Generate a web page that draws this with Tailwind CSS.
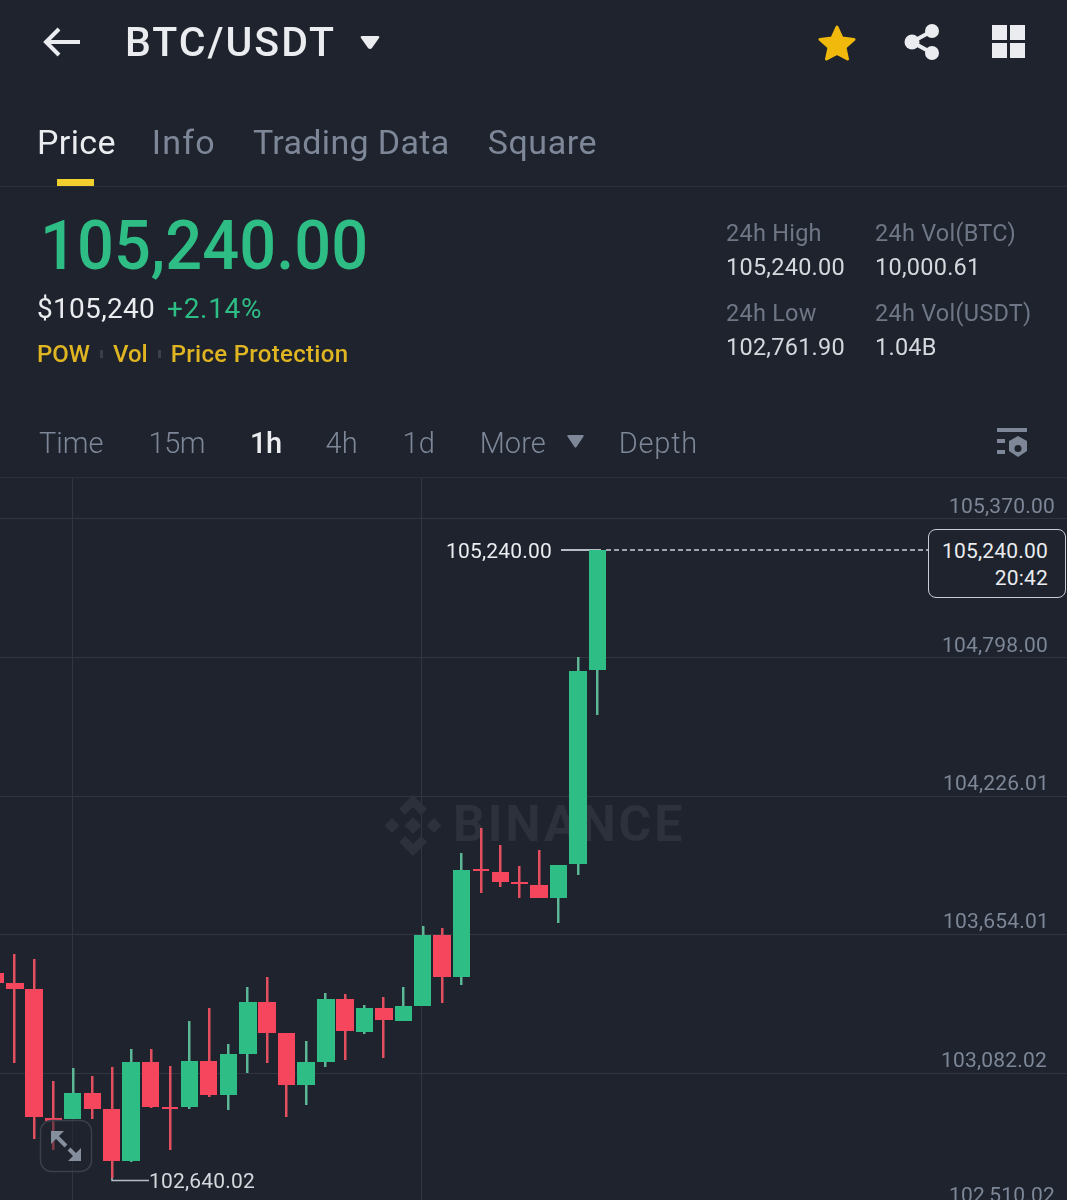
<!DOCTYPE html>
<html lang="en">
<head>
<meta charset="utf-8">
<title>BTC/USDT</title>
<script src="https://cdn.jsdelivr.net/npm/@tailwindcss/browser@4"></script>
</head>
<body class="m-0 bg-[#1e232d] font-['Roboto',sans-serif]">
<div class="w-[1067px] h-[1200px] overflow-hidden flex flex-col bg-[#1e232d] text-[#eaecef]">

  <header class="h-[84px] shrink-0 flex items-center pl-[42px] pr-[41px]">
    <svg class="w-[38px] h-[30px]" viewBox="0 0 38 30" fill="none" stroke="#eaecef" stroke-width="4"><path d="M38 15H3"/><path d="M17 2 4 15l13 13"/></svg>
    <span class="ml-[45px] text-[41px] leading-none font-medium tracking-[2px]">BTC/USDT</span>
    <svg class="ml-[24px] w-[20px] h-[15px]" viewBox="0 0 20 15" fill="#eaecef"><path d="M2 1h16q2 0 1 2l-7 10q-2 2-4 0L1 3Q0 1 2 1z"/></svg>
    <div class="ml-auto flex items-center">
      <svg class="w-[38px] h-[37px]" viewBox="0 0 38 37"><path fill="#f0b90b" stroke="#f0b90b" stroke-width="3" stroke-linejoin="round" d="M19 3l5 11 12 1.500-9 8 2.500 11.500L19 29.500 8.500 35 11 23.500l-9-8L14 14z"/></svg>
      <svg class="ml-[48px] w-[38px] h-[38px]" viewBox="0 0 38 38"><g fill="#eaecef"><circle cx="28" cy="8" r="7"/><circle cx="8" cy="19" r="7.500"/><circle cx="28" cy="30" r="7"/></g><path d="M28 8 8 19l20 11" fill="none" stroke="#eaecef" stroke-width="4"/></svg>
      <svg class="ml-[50px] w-[34px] h-[34px]" viewBox="0 0 34 34" fill="#eaecef"><rect x="0" y="0" width="15" height="15"/><rect x="18" y="0" width="15" height="15"/><rect x="0" y="18" width="15" height="15"/><rect x="18" y="18" width="15" height="15"/></svg>
    </div>
  </header>

  <nav class="h-[103px] shrink-0 flex items-start pl-[37px] pt-[38px] border-b border-[#2a2f39] text-[34px] leading-[40px] tracking-[0.35px] text-[#7d8798]">
    <span class="relative text-[#eaecef]">Price<span class="absolute left-[20px] top-[57px] w-[37px] h-[7px] bg-[#f0cf2e]"></span></span>
    <span class="ml-[36px] tracking-[1.2px]">Info</span>
    <span class="ml-[37px]">Trading Data</span>
    <span class="ml-[38px] tracking-[0.6px]">Square</span>
  </nav>

  <section class="h-[223px] shrink-0 flex pt-[29px]">
    <div class="pl-[37px] w-[726px] shrink-0">
      <div class="pl-[3px] text-[65px] leading-[60px] font-medium text-[#2ebd85] scale-y-[1.06]">105,240.00</div>
      <div class="mt-[18px] flex items-center h-[30px] text-[28px] leading-[30px] tracking-[0.3px]">
        <span class="text-[#eaecef]">$105,240</span>
        <span class="ml-[12px] text-[#2ebd85] tracking-[0.7px]">+2.14%</span>
      </div>
      <div class="mt-[15px] flex items-center h-[30px] text-[24px] leading-[30px] font-medium text-[#e0b522]">
        <span>POW</span><span class="mx-[10px] w-[3px] h-[8px] bg-[#3a3f49]"></span>
        <span>Vol</span><span class="mx-[10px] w-[3px] h-[8px] bg-[#3a3f49]"></span>
        <span class="tracking-[0.3px]">Price Protection</span>
      </div>
    </div>
    <div class="self-start grid grid-cols-[149px_1fr] gap-y-[12px] text-[23.500px] leading-[34px] tracking-[0.25px] text-[#d5d8dd]">
      <div><div class="text-[#6f7787]">24h High</div><div>105,240.00</div></div>
      <div><div class="text-[#6f7787]">24h Vol(BTC)</div><div>10,000.61</div></div>
      <div><div class="text-[#6f7787]">24h Low</div><div>102,761.90</div></div>
      <div><div class="text-[#6f7787]">24h Vol(USDT)</div><div>1.04B</div></div>
    </div>
  </section>

  <div class="h-[68px] shrink-0 flex items-center pl-[39px] pr-[39px] border-b border-[#2a2f39] text-[29px] font-light text-[#7d8798]">
    <span>Time</span>
    <span class="ml-[45px] tracking-[-0.5px]">15m</span>
    <span class="ml-[45px] font-medium text-[#eaecef] tracking-[-0.5px]">1h</span>
    <span class="ml-[44px]">4h</span>
    <span class="ml-[45px]">1d</span>
    <span class="ml-[45px]">More</span>
    <svg class="ml-[21px] mb-[4px] w-[17px] h-[13px]" viewBox="0 0 17 13" fill="#7d8798"><path d="M1 0h15q1 0 .5 1.500L9.500 12q-1 1.500-2 0L.5 1.500Q0 0 1 0z"/></svg>
    <span class="ml-[35px] tracking-[0.8px]">Depth</span>
    <svg class="ml-auto w-[31px] h-[31px]" viewBox="0 0 31 31" fill="#7d8798"><rect x="0" y="0" width="30" height="4"/><rect x="0" y="11" width="8" height="4"/><rect x="0" y="22" width="8" height="4"/><path fill-rule="evenodd" d="M21 8l9 5v10l-9 6-9-6V13zm0 9a3.500 3.500 0 1 0 0 7 3.500 3.500 0 0 0 0-7z"/></svg>
  </div>

  <main class="relative flex-1 overflow-hidden">
    <svg class="absolute left-0 top-0 w-[1067px] h-[722px]" viewBox="0 478 1067 722">
      <!-- grid -->
      <g fill="#30353f">
        <rect x="0" y="518" width="1067" height="1"/><rect x="0" y="657" width="1067" height="1"/><rect x="0" y="796" width="1067" height="1"/><rect x="0" y="934" width="1067" height="1"/><rect x="0" y="1073" width="1067" height="1"/>
        <rect x="72" y="478" width="1" height="722"/><rect x="421" y="478" width="1" height="722"/>
      </g>
      <!-- watermark logo -->
      <g fill="#2c313c">
        <path d="M413 795l14 14-6 6-8-8-8 8-6-6z"/>
        <path d="M413 856l14-14-6-6-8 8-8-8-6 6z"/>
        <path d="M413 817l8.500 8.500-8.500 8.500-8.500-8.500z"/>
        <path d="M392 818l7.500 7.500-7.500 7.500-7.500-7.500z"/>
        <path d="M434 818l7.500 7.500-7.500 7.500-7.500-7.500z"/>
      </g>
      <!-- last price line -->
      <rect x="561" y="549" width="40" height="2" fill="#b7bdc6"/>
      <path d="M606 550H928" stroke="#c9ced6" stroke-width="1.500" stroke-dasharray="5 3" fill="none"/>
      <path d="M112 1165v15.500h37" stroke="#b7bdc6" stroke-width="1.500" fill="none"/>
      <!-- wicks -->
      <g fill="#e2505f">
        <rect x="13" y="954" width="2.500" height="109"/><rect x="33" y="959" width="2.500" height="180"/><rect x="52" y="1081" width="2.500" height="69"/><rect x="91" y="1076" width="2.500" height="43"/><rect x="111" y="1067" width="2.500" height="111"/><rect x="150" y="1049" width="2.500" height="59"/><rect x="169" y="1066" width="2.500" height="84"/><rect x="208" y="1008" width="2.500" height="89"/><rect x="266" y="977" width="2.500" height="86"/><rect x="285" y="1033" width="2.500" height="84"/><rect x="344" y="994" width="2.500" height="66"/><rect x="382" y="997" width="2.500" height="61"/><rect x="441" y="928" width="2.500" height="75"/><rect x="480" y="828" width="2.500" height="65"/><rect x="499" y="845" width="2.500" height="42"/><rect x="518" y="866" width="2.500" height="32"/><rect x="538" y="850" width="2.500" height="35"/>
      </g>
      <g fill="#5bb796">
        <rect x="72" y="1068" width="2.500" height="51"/><rect x="130" y="1049" width="2.500" height="113"/><rect x="188" y="1021" width="2.500" height="88"/><rect x="227" y="1044" width="2.500" height="66"/><rect x="246" y="987" width="2.500" height="86"/><rect x="305" y="1041" width="2.500" height="64"/><rect x="324" y="993" width="2.500" height="74"/><rect x="363" y="1005" width="2.500" height="29"/><rect x="402" y="987" width="2.500" height="19"/><rect x="422" y="926" width="2.500" height="80"/><rect x="460" y="853" width="2.500" height="132"/><rect x="557" y="865" width="2.500" height="58"/><rect x="577" y="657" width="2.500" height="218"/><rect x="596" y="670" width="2.500" height="45"/>
      </g>
      <!-- red bodies -->
      <g fill="#f6465d">
        <rect x="-4" y="973" width="8" height="10"/><rect x="6" y="983" width="18" height="6"/><rect x="25" y="989" width="18" height="128"/><rect x="45" y="1118" width="17" height="3"/><rect x="84" y="1093" width="17" height="16"/><rect x="103" y="1109" width="17" height="52"/><rect x="142" y="1062" width="17" height="45"/><rect x="162" y="1107" width="16" height="2"/><rect x="200" y="1061" width="17" height="34"/><rect x="258" y="1002" width="18" height="31"/><rect x="278" y="1033" width="17" height="52"/><rect x="336" y="999" width="18" height="32"/><rect x="375" y="1008" width="18" height="12"/><rect x="433" y="935" width="18" height="42"/><rect x="473" y="869" width="16" height="2"/><rect x="492" y="872" width="17" height="10"/><rect x="511" y="882" width="17" height="2"/><rect x="530" y="885" width="18" height="13"/>
      </g>
      <!-- green bodies -->
      <g fill="#2ebd85">
        <rect x="64" y="1093" width="17" height="26"/><rect x="122" y="1062" width="18" height="99"/><rect x="181" y="1061" width="17" height="46"/><rect x="220" y="1054" width="17" height="41"/><rect x="239" y="1002" width="18" height="52"/><rect x="297" y="1062" width="18" height="23"/><rect x="317" y="999" width="18" height="63"/><rect x="356" y="1008" width="17" height="24"/><rect x="395" y="1006" width="17" height="15"/><rect x="414" y="935" width="17" height="71"/><rect x="453" y="870" width="17" height="107"/><rect x="550" y="865" width="17" height="33"/><rect x="569" y="671" width="18" height="193"/><rect x="589" y="550" width="17" height="120"/>
      </g>
      <!-- expand button -->
      <rect x="40.500" y="1120.500" width="51" height="51" rx="11" fill="#1e232d" fill-opacity=".5" stroke="#3a404b" stroke-width="1.500"/>
      <g fill="#848e9c">
        <path d="M51 1131h13l-13 13z"/>
        <path d="M81 1161H68l13-13z"/>
      </g>
      <path d="M55 1135l11 11M77 1157l-8-8" stroke="#848e9c" stroke-width="4" fill="none"/>
    </svg>

    <!-- watermark text: lighten keeps it behind the brighter candles -->
    <span class="absolute left-[453px] top-[316px] text-[50px] leading-[60px] font-bold tracking-[2.900px] text-[#2c313c] mix-blend-lighten">BINANCE</span>

    <span class="absolute right-[12px] top-[15px] text-[21px] leading-[26px] tracking-[0.2px] text-[#7d8798]">105,370.00</span>
    <span class="absolute right-[19px] top-[154px] text-[21px] leading-[26px] tracking-[0.2px] text-[#7d8798]">104,798.00</span>
    <span class="absolute right-[18px] top-[292px] text-[21px] leading-[26px] tracking-[0.2px] text-[#7d8798]">104,226.01</span>
    <span class="absolute right-[18px] top-[430px] text-[21px] leading-[26px] tracking-[0.2px] text-[#7d8798]">103,654.01</span>
    <span class="absolute right-[20px] top-[569px] text-[21px] leading-[26px] tracking-[0.2px] text-[#7d8798]">103,082.02</span>
    <span class="absolute right-[12px] top-[704px] text-[21px] leading-[26px] tracking-[0.2px] text-[#7d8798]">102,510.02</span>

    <span class="absolute left-[446px] top-[60px] text-[21px] leading-[26px] tracking-[0.2px] text-[#eaecef]">105,240.00</span>
    <span class="absolute left-[149px] top-[690px] text-[21px] leading-[26px] tracking-[0.2px] text-[#d5d8dd]">102,640.02</span>

    <div class="absolute left-[928px] top-[51px] w-[138px] h-[69px] rounded-[8px] border border-[#c9ced6] bg-[#1e232d] pr-[17px] pt-[8px] text-right text-[21px] leading-[26px] tracking-[0.2px] text-[#eaecef]">
      <div>105,240.00</div>
      <div class="mt-[1px]">20:42</div>
    </div>
  </main>
</div>
</body>
</html>
